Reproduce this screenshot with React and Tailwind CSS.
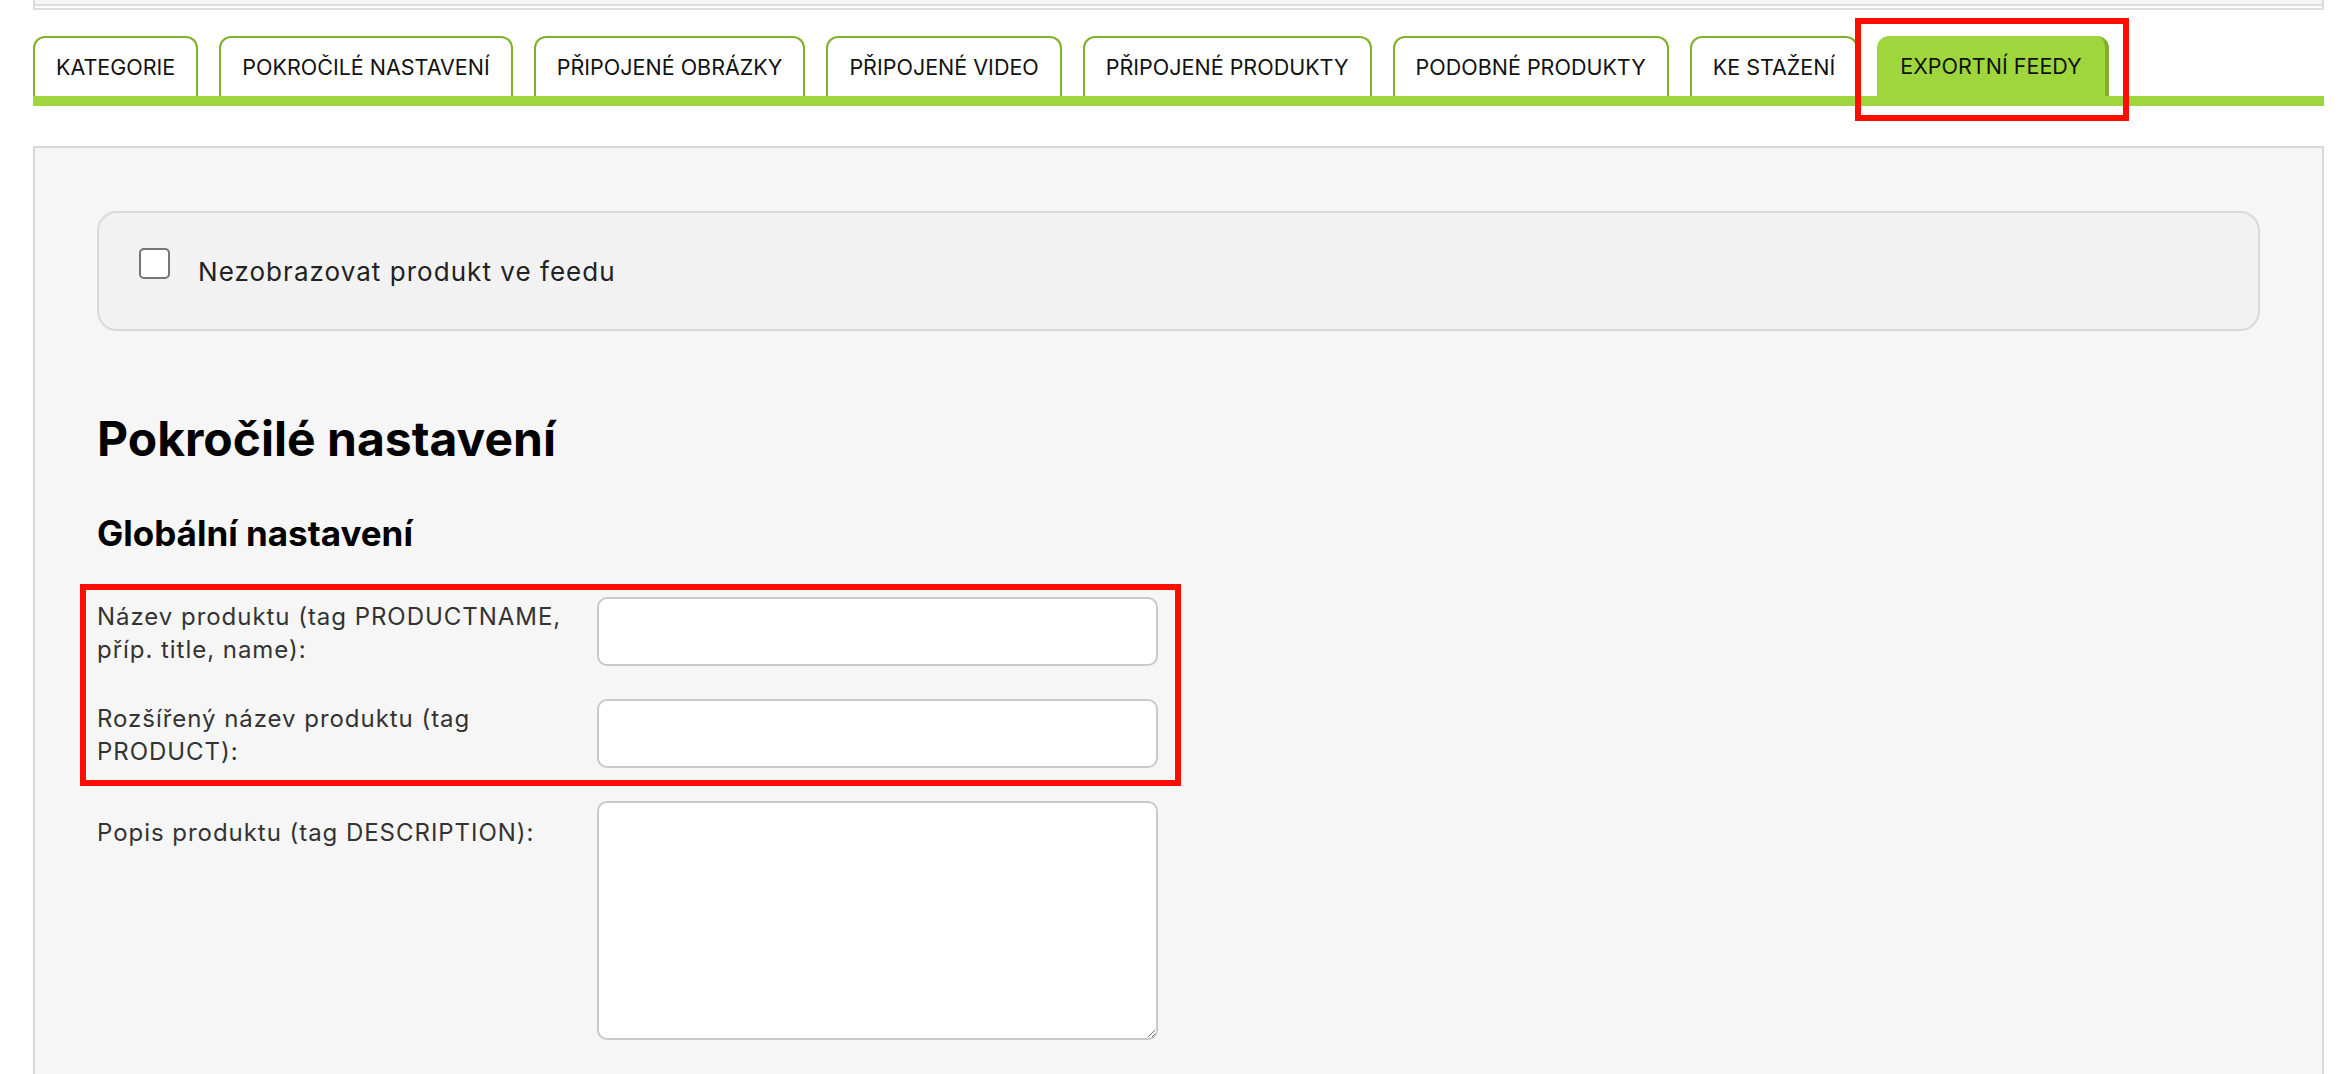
import React from 'react';

const tabs = [
  'Kategorie',
  'Pokročilé nastavení',
  'Připojené obrázky',
  'Připojené video',
  'Připojené produkty',
  'Podobné produkty',
  'Ke stažení',
];

const Field = ({ label, children, labelClass }) => (
  <div className="flex items-start">
    <label className={`w-[490px] shrink-0 text-[24px] leading-[33px] tracking-[0.04em] text-[#333] ${labelClass}`}>{label}</label>
    {children}
  </div>
);

export default function App() {
  return (
    <div className="relative min-h-screen bg-white font-['Inter','Liberation_Sans',sans-serif] text-[#111]">
      <div className="pl-[33px] pr-[24px]">
        {/* strip of the box above */}
        <div className="h-[10px] border-x-2 border-b-2 border-[#dcdcdc] bg-white">
          <div className="h-[6px] border-b-2 border-[#dedede] bg-[#f4f4f4]" />
        </div>

        {/* tabs */}
        <div className="mt-[26px] flex items-end gap-[21px]">
          {tabs.map((t) => (
            <div
              key={t}
              className="flex h-[60px] items-center rounded-t-[12px] border-2 border-b-0 border-[#80b12c] bg-white px-[21px] text-[21.5px] uppercase"
            >
              {t}
            </div>
          ))}
          <div className="-ml-[2px] flex h-[60px] items-center rounded-t-[12px] border-r-[4px] border-[#7fae2a] bg-[#9fd63d] pl-[23px] pr-[23px] text-[21.5px] uppercase">
            Exportní feedy
          </div>
        </div>
        <div className="h-[10px] bg-[#9fd63d]" />

        {/* panel */}
        <div className="mt-[40px] min-h-[960px] border-2 border-[#d7d7d7] bg-[#f6f6f6] px-[62px] pt-[63px]">
          <div className="flex h-[120px] items-center rounded-[20px] border-2 border-[#d9d9d9] bg-[#f2f2f2] pl-[40px]">
            <input
              type="checkbox"
              className="mb-[15px] h-[31px] w-[31px] appearance-none rounded-[5px] border-2 border-[#767676] bg-white"
            />
            <span className="ml-[28px] text-[26px] tracking-[0.04em] text-[#222]">Nezobrazovat produkt ve feedu</span>
          </div>

          <h1 className="mt-[80px] text-[48px] font-bold leading-[56px] text-black">Pokročilé nastavení</h1>
          <h2 className="mt-[45px] text-[35px] font-bold leading-[42px] text-black">Globální nastavení</h2>

          <div className="mt-[43px] flex flex-col gap-[33px]">
            <Field label="Název produktu (tag PRODUCTNAME, příp. title, name):" labelClass="mt-[3px]">
              <input type="text" className="ml-[10px] h-[69px] w-[561px] rounded-[10px] border-2 border-[#c9c9c9] bg-white" />
            </Field>
            <Field label="Rozšířený název produktu (tag PRODUCT):" labelClass="mt-[3px]">
              <input type="text" className="ml-[10px] h-[69px] w-[561px] rounded-[10px] border-2 border-[#c9c9c9] bg-white" />
            </Field>
            <Field label="Popis produktu (tag DESCRIPTION):" labelClass="mt-[15px]">
              <textarea className="ml-[10px] h-[239px] w-[561px] rounded-[10px] border-2 border-[#c9c9c9] bg-white" />
            </Field>
          </div>
        </div>
      </div>

      {/* red highlight marks */}
      <div className="absolute left-[1855px] top-[18px] h-[103px] w-[274px] border-[6px] border-[#ff0d00]" />
      <div className="absolute left-[80px] top-[584px] h-[202px] w-[1101px] border-[6px] border-[#ff0d00]" />
    </div>
  );
}
